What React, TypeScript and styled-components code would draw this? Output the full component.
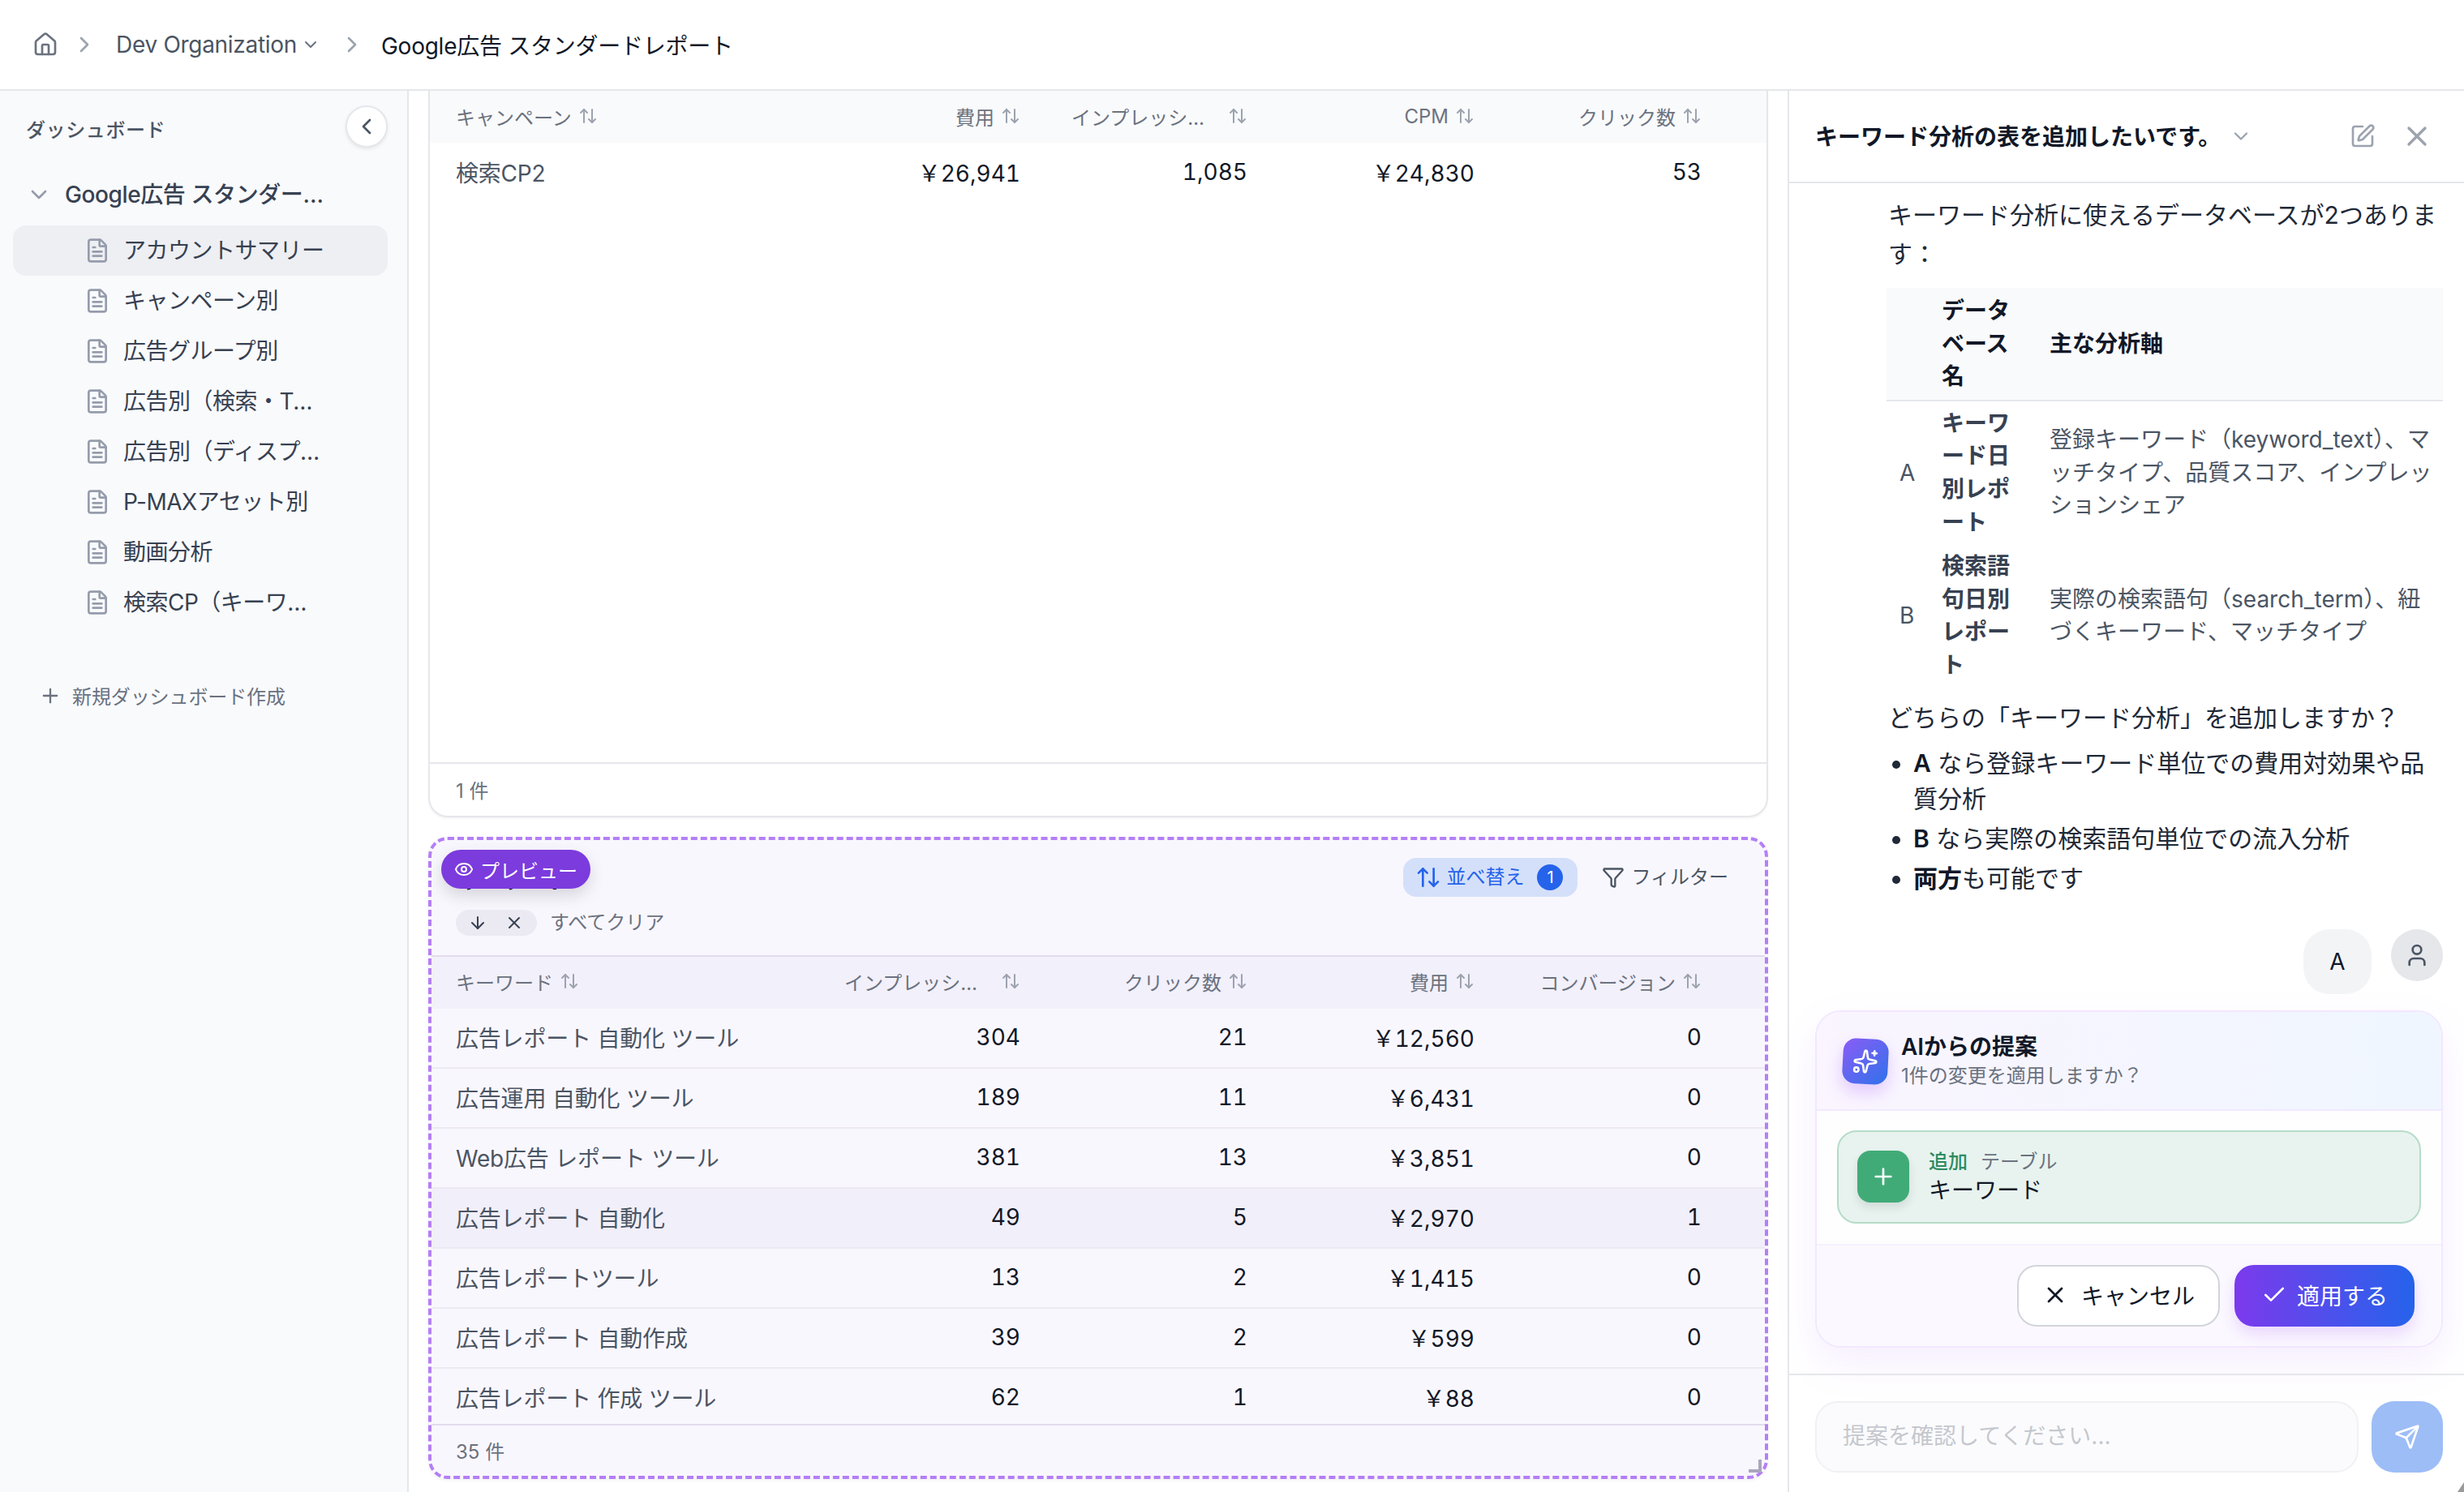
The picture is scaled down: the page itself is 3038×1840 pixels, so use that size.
import React from 'react';
import styled, {createGlobalStyle} from 'styled-components';
import {
  ArrowDown,
  ArrowUpDown,
  Check,
  ChevronDown,
  ChevronLeft,
  ChevronRight,
  Eye,
  FileText,
  Funnel,
  House,
  Plus,
  Send,
  Sparkles,
  SquarePen,
  User,
  X,
} from 'lucide-react';

const GlobalStyle = createGlobalStyle`
  html, body {
    margin: 0;
    padding: 0;
    background: #fff;
  }
  body {
    font-family: Inter, "Noto Sans CJK JP", sans-serif;
    color: #111827;
  }
  * {
    box-sizing: border-box;
  }
`;

const Page = styled.div`
  width: 3038px;
  height: 1840px;
  display: flex;
  flex-direction: column;
  overflow: hidden;
  position: relative;
  background: #fff;
`;

const TopBar = styled.header`
  height: 112px;
  flex: none;
  display: flex;
  align-items: center;
  padding-left: 40px;
  border-bottom: 2px solid #e5e7eb;
  font-size: 28px;
`;

const HomeIcon = styled(House)`
  color: #6b7280;
  flex: none;
`;

const CrumbSep = styled(ChevronRight)<{$left: number; $right: number}>`
  color: #9ca3af;
  flex: none;
  margin: 0 ${p => p.$right}px 0 ${p => p.$left}px;
`;

const Crumb = styled.span`
  color: #4b5563;
  letter-spacing: -0.3px;
`;

const CrumbChevron = styled(ChevronDown)`
  color: #6b7280;
  margin-left: 5px;
`;

const CrumbCurrent = styled.span`
  color: #111827;
  letter-spacing: -0.25px;
`;

const Workspace = styled.div`
  flex: 1;
  min-height: 0;
  display: flex;
`;

const Sidebar = styled.aside`
  width: 504px;
  flex: none;
  background: #f9fafc;
  border-right: 2px solid #e5e7eb;
`;

const SidebarHead = styled.div`
  display: flex;
  align-items: center;
  justify-content: space-between;
  padding: 18px 24px 0 32px;
`;

const SidebarTitle = styled.div`
  font-size: 24px;
  font-weight: 500;
  color: #4b5563;
  letter-spacing: 0.6px;
  margin-top: 5px;
`;

const CollapseButton = styled.div`
  width: 52px;
  height: 52px;
  border-radius: 50%;
  background: #fff;
  border: 2px solid #e5e7eb;
  box-shadow: 0 2px 4px rgba(0, 0, 0, 0.08);
  display: flex;
  align-items: center;
  justify-content: center;
  color: #4b5563;
`;

const TreeRoot = styled.div`
  height: 62px;
  margin-top: 27px;
  margin-bottom: 7px;
  padding: 0 0 5px 32px;
  display: flex;
  align-items: center;
  gap: 16px;
  color: #374151;
  font-size: 28px;
  font-weight: 500;
  letter-spacing: -0.4px;

  > svg {
    color: #959cab;
    flex: none;
    margin-top: 5px;
  }
  > span {
    max-width: 326px;
    overflow: hidden;
    white-space: nowrap;
    text-overflow: ellipsis;
  }
`;

const TreeItem = styled.div<{$active?: boolean}>`
  height: 62px;
  margin: 0 24px 0 16px;
  padding: 0 0 4px 88px;
  display: flex;
  align-items: center;
  gap: 16px;
  border-radius: 16px;
  font-size: 28px;
  color: #374151;
  letter-spacing: -0.5px;
  background: ${p => (p.$active ? '#eeeff3' : 'transparent')};

  > svg {
    color: #959cab;
    flex: none;
    margin-top: 4px;
  }
  > span {
    max-width: 250px;
    overflow: hidden;
    white-space: nowrap;
    text-overflow: ellipsis;
  }
`;

const NewDashboard = styled.div`
  margin-top: 66px;
  padding-left: 48px;
  display: flex;
  align-items: center;
  gap: 13px;
  font-size: 24px;
  color: #6b7280;
  letter-spacing: -0.1px;
`;

const Main = styled.main`
  flex: 1;
  min-width: 0;
  padding: 0 24px 16px;
  display: flex;
  flex-direction: column;
  gap: 24px;
`;

const TableCard = styled.section`
  height: 896px;
  flex: none;
  display: flex;
  flex-direction: column;
  background: #fff;
  border: 2px solid #e5e7eb;
  border-top: none;
  border-radius: 0 0 24px 24px;
  box-shadow: 0 2px 2px rgba(0, 0, 0, 0.04);
  overflow: hidden;
`;

const PreviewCard = styled.section`
  height: 792px;
  flex: none;
  position: relative;
  display: flex;
  flex-direction: column;
  background: #f9f7fe;
  border: 4px dashed #b47ff6;
  border-radius: 24px;
  box-shadow: 0 2px 4px rgba(0, 0, 0, 0.05);
`;

const PreviewBadge = styled.div`
  position: absolute;
  left: 12px;
  top: 12px;
  z-index: 2;
  height: 48px;
  display: flex;
  align-items: center;
  gap: 8px;
  padding: 0 16px;
  border-radius: 24px;
  background: #7c3bdd;
  color: #fff;
  font-size: 24px;
  box-shadow: 0 8px 20px rgba(0, 0, 0, 0.14);
`;

const Toolbar = styled.div`
  flex: none;
  padding: 22px 33px 24px 30px;
  display: flex;
  flex-wrap: wrap;
  align-items: center;
  justify-content: space-between;
  row-gap: 16px;
`;

const ToolbarTitle = styled.div`
  height: 40px;
  line-height: 40px;
  margin-top: 8px;
  font-size: 28px;
  font-weight: 600;
  color: #111827;
`;

const ToolbarActions = styled.div`
  display: flex;
  align-items: center;
  gap: 17px;
`;

const SortButton = styled.div`
  height: 48px;
  display: flex;
  align-items: center;
  padding: 0 18px 0 15px;
  border-radius: 16px;
  background: #d4e0fa;
  color: #2563eb;
  font-size: 24px;
  line-height: 32px;
  gap: 6px;
`;

const SortCount = styled.span`
  width: 32px;
  height: 32px;
  margin-left: 10px;
  border-radius: 50%;
  background: #2563eb;
  color: #fff;
  font-size: 20px;
  display: flex;
  align-items: center;
  justify-content: center;
`;

const FilterButton = styled.div`
  height: 48px;
  display: flex;
  align-items: center;
  gap: 8px;
  padding: 0 12px 0 13px;
  font-size: 24px;
  line-height: 32px;
  color: #4b5563;
`;

const SortRow = styled.div`
  width: 100%;
  height: 32px;
  line-height: 32px;
  display: flex;
  align-items: center;
  gap: 16px;
  font-size: 24px;
  color: #6b7280;
`;

const SortChip = styled.div`
  width: 100px;
  height: 32px;
  padding: 0 16px 0 15px;
  display: flex;
  align-items: center;
  justify-content: space-between;
  border-radius: 16px;
  background: #ebe9f2;
  color: #374151;
`;

const TableGrid = styled.div<{$preview?: boolean}>`
  display: grid;
  grid-template-columns: 416px repeat(4, 280px);
  align-items: center;
  padding-left: ${p => (p.$preview ? 30 : 32)}px;
`;

const HeadRow = styled(TableGrid)`
  flex: none;
  height: ${p => (p.$preview ? 66 : 64)}px;
  padding-bottom: ${p => (p.$preview ? 4 : 2)}px;
  background: ${p => (p.$preview ? '#f2f0fa' : '#f9fafb')};
  border-top: ${p => (p.$preview ? '2px solid #e1dcec' : 'none')};
  font-size: 24px;
  color: #6b7280;
`;

const HeadCell = styled.div<{$right?: boolean}>`
  display: flex;
  align-items: center;
  justify-content: ${p => (p.$right ? 'flex-end' : 'flex-start')};
  gap: 8px;
  white-space: nowrap;

  > svg {
    flex: none;
    color: #9ca3af;
  }
`;

const HeadLabelClamp = styled.span`
  width: 183px;
  margin-right: 2px;
  overflow: hidden;
  text-overflow: ellipsis;
`;

const Rows = styled.div`
  flex: 1;
  min-height: 0;
  overflow: hidden;
`;

const DataRow = styled(TableGrid)<{$hover?: boolean}>`
  height: 74px;
  padding-bottom: 3px;
  font-size: 28px;
  background: ${p => (p.$hover ? '#f1eff9' : 'transparent')};
  border-bottom: ${p => (p.$preview ? '2px solid #ece9f3' : 'none')};
`;

const NameCell = styled.div`
  color: #4b5563;
  white-space: nowrap;
  letter-spacing: -0.2px;
`;

const NumCell = styled.div`
  color: #111827;
  text-align: right;
  font-variant-numeric: tabular-nums;
`;

const TableFooter = styled.div<{$preview?: boolean}>`
  flex: none;
  height: ${p => (p.$preview ? 64 : 66)}px;
  padding-bottom: 2px;
  display: flex;
  align-items: center;
  padding-left: ${p => (p.$preview ? 30 : 32)}px;
  border-top: 2px solid ${p => (p.$preview ? '#e1dcec' : '#e5e7eb')};
  font-size: 24px;
  color: #6b7280;
`;

const ResizeHandle = styled.div`
  position: absolute;
  right: 4px;
  bottom: 4px;
  width: 16px;
  height: 16px;
  border-right: 4px solid #a9a6bd;
  border-bottom: 4px solid #a9a6bd;
`;

const ChatPanel = styled.aside`
  width: 834px;
  flex: none;
  display: flex;
  flex-direction: column;
  border-left: 2px solid #e5e7eb;
`;

const ChatHeader = styled.div`
  height: 114px;
  flex: none;
  display: flex;
  align-items: center;
  padding: 0 38px 0 32px;
  border-bottom: 2px solid #e5e7eb;
`;

const ChatTitle = styled.div`
  font-size: 28px;
  font-weight: 600;
  color: #111827;
  margin-bottom: 2px;
`;

const ChatTitleChevron = styled(ChevronDown)`
  color: #9ca3af;
  margin-left: 11px;
`;

const ChatActions = styled.div`
  margin-left: auto;
  display: flex;
  align-items: center;
  gap: 31px;
  color: #9ca3af;
`;

const Messages = styled.div`
  flex: 1;
  min-height: 0;
  padding: 15px 26px 0 32px;
`;

const Answer = styled.div`
  padding-left: 90px;
  font-size: 30px;
  color: #1f2937;
`;

const Para = styled.p`
  margin: 0;
  line-height: 48px;
`;

const DataTable = styled.table`
  width: 686px;
  margin: 18px 0 13px -2px;
  table-layout: fixed;
  border-collapse: collapse;
  font-size: 28px;
  line-height: 40.6px;

  th:nth-child(1) {
    width: 52px;
  }
  th:nth-child(2) {
    width: 133px;
  }
  th {
    padding: 8px 16px;
    text-align: left;
    font-weight: 600;
    color: #111827;
    background: #f9fafb;
    border-bottom: 2px solid #e5e7eb;
  }
  td {
    padding: 7px 6px 7px 16px;
    color: #4b5563;
    vertical-align: middle;
  }
  td:nth-child(2) {
    padding-right: 16px;
    font-weight: 600;
    color: #374151;
  }
`;

const BulletList = styled.ul`
  margin: 10px 0 0;
  padding-left: 31px;
  line-height: 44px;

  li + li {
    margin-top: 5px;
  }
  strong {
    font-weight: 600;
    color: #111827;
  }
`;

const UserRow = styled.div`
  margin-top: 41px;
  display: flex;
  justify-content: flex-end;
  align-items: flex-start;
  gap: 24px;
`;

const UserBubble = styled.div`
  width: 84px;
  height: 80px;
  border-radius: 32px;
  background: #f3f4f6;
  font-size: 28px;
  color: #111827;
  display: flex;
  align-items: center;
  justify-content: center;
`;

const UserAvatar = styled.div`
  width: 64px;
  height: 64px;
  border-radius: 50%;
  background: #e5e7eb;
  color: #4b5563;
  display: flex;
  align-items: center;
  justify-content: center;
`;

const ProposalCard = styled.div`
  margin-top: 20px;
  height: 416px;
  display: flex;
  flex-direction: column;
  border: 2px solid #f3e8ff;
  border-radius: 32px;
  background: #fff;
  box-shadow: 0 20px 50px rgba(168, 85, 247, 0.1);
`;

const ProposalHead = styled.div`
  height: 122px;
  flex: none;
  display: flex;
  align-items: center;
  gap: 16px;
  padding: 2px 0 0 32px;
  border-bottom: 2px solid #f3e8ff;
  border-radius: 30px 30px 0 0;
  background: linear-gradient(90deg, #faf5ff, #eff6ff);
`;

const SparkTile = styled.div`
  width: 56px;
  height: 56px;
  flex: none;
  border-radius: 16px;
  transform: rotate(3deg);
  background: linear-gradient(135deg, #8b5cf6, #2f72ea);
  box-shadow: 0 10px 20px rgba(168, 85, 247, 0.28);
  color: #fff;
  display: flex;
  align-items: center;
  justify-content: center;
`;

const ProposalTitle = styled.div`
  font-size: 28px;
  line-height: 36px;
  font-weight: 600;
  color: #111827;
`;

const ProposalSub = styled.div`
  font-size: 24px;
  line-height: 36px;
  color: #6b7280;
`;

const ProposalBody = styled.div`
  height: 166px;
  flex: none;
  padding: 24px 25px;
  border-bottom: 2px solid #f6f0ff;
  background: #fefeff;
`;

const ChangeRow = styled.div`
  height: 115px;
  display: flex;
  align-items: center;
  gap: 24px;
  padding-left: 23px;
  border: 2px solid #b5dcc8;
  border-radius: 24px;
  background: #e8f3ef;
`;

const ChangeTile = styled.div`
  width: 64px;
  height: 64px;
  border-radius: 16px;
  background: #41ab78;
  box-shadow: 0 6px 12px rgba(0, 0, 0, 0.1);
  color: #fff;
  display: flex;
  align-items: center;
  justify-content: center;
`;

const ChangeMeta = styled.div`
  display: flex;
  gap: 16px;
  font-size: 24px;
  line-height: 34px;
  color: #6b7280;

  > b {
    font-weight: 500;
    color: #2e8b63;
  }
`;

const ChangeName = styled.div`
  font-size: 28px;
  line-height: 36px;
  color: #111827;
`;

const ProposalFoot = styled.div`
  flex: 1;
  display: flex;
  align-items: center;
  justify-content: flex-end;
  gap: 18px;
  padding-right: 33px;
  border-radius: 0 0 30px 30px;
  background: #fbf9ff;
`;

const CancelButton = styled.div`
  height: 76px;
  width: 250px;
  padding-bottom: 2px;
  display: flex;
  align-items: center;
  justify-content: center;
  gap: 16px;
  border: 2px solid #d1d5db;
  border-radius: 24px;
  background: #fff;
  font-size: 28px;
  color: #111827;
`;

const ApplyButton = styled.div`
  height: 76px;
  width: 222px;
  padding-bottom: 2px;
  display: flex;
  align-items: center;
  justify-content: center;
  gap: 12px;
  border-radius: 24px;
  background: linear-gradient(90deg, #7c3aed, #2563eb);
  box-shadow: 0 10px 20px rgba(168, 85, 247, 0.2);
  font-size: 28px;
  color: #fff;
`;

const Composer = styled.div`
  height: 146px;
  flex: none;
  display: flex;
  gap: 16px;
  padding: 32px 26px 0 32px;
  border-top: 2px solid #e5e7eb;
`;

const ComposerInput = styled.div`
  flex: 1;
  height: 88px;
  padding: 0 0 6px 32px;
  display: flex;
  align-items: center;
  border: 2px solid #f1f1f4;
  border-radius: 28px;
  background: #fbfbfd;
  font-size: 28px;
  color: #c5c8ce;
`;

const SendButton = styled.div`
  width: 88px;
  height: 88px;
  border-radius: 28px;
  background: #9dbdf6;
  color: #fff;
  display: flex;
  align-items: center;
  justify-content: center;
`;

const CornerMark = styled.svg`
  position: absolute;
  right: 0;
  bottom: 0;
`;

const navItems = [
  'アカウントサマリー',
  'キャンペーン別',
  '広告グループ別',
  '広告別（検索・TOP）',
  '広告別（ディスプレイ）',
  'P-MAXアセット別',
  '動画分析',
  '検索CP（キーワード別）',
];

const keywordRows = [
  ['広告レポート 自動化 ツール', '304', '21', '￥12,560', '0'],
  ['広告運用 自動化 ツール', '189', '11', '￥6,431', '0'],
  ['Web広告 レポート ツール', '381', '13', '￥3,851', '0'],
  ['広告レポート 自動化', '49', '5', '￥2,970', '1'],
  ['広告レポートツール', '13', '2', '￥1,415', '0'],
  ['広告レポート 自動作成', '39', '2', '￥599', '0'],
  ['広告レポート 作成 ツール', '62', '1', '￥88', '0'],
];

function HeaderLabels({labels, preview}: {labels: string[]; preview?: boolean}) {
  return (
    <HeadRow $preview={preview}>
      {labels.map((label, i) => (
        <HeadCell key={label} $right={i > 0}>
          {label === 'インプレッション'
            ? <HeadLabelClamp>{label}</HeadLabelClamp>
            : <span>{label}</span>}
          <ArrowUpDown size={24}/>
        </HeadCell>
      ))}
    </HeadRow>
  );
}

function App() {
  return (
    <Page>
      <GlobalStyle/>
      <TopBar>
        <HomeIcon size={32}/>
        <CrumbSep size={32} $left={16} $right={23}/>
        <Crumb>Dev Organization</Crumb>
        <CrumbChevron size={24}/>
        <CrumbSep size={32} $left={23} $right={20}/>
        <CrumbCurrent>Google広告 スタンダードレポート</CrumbCurrent>
      </TopBar>

      <Workspace>
        <Sidebar>
          <SidebarHead>
            <SidebarTitle>ダッシュボード</SidebarTitle>
            <CollapseButton><ChevronLeft size={32}/></CollapseButton>
          </SidebarHead>
          <TreeRoot>
            <ChevronDown size={32}/>
            <span>Google広告 スタンダードレポート</span>
          </TreeRoot>
          {navItems.map((item, i) => (
            <TreeItem key={item} $active={i === 0}>
              <FileText size={32}/>
              <span>{item}</span>
            </TreeItem>
          ))}
          <NewDashboard>
            <Plus size={28}/>
            新規ダッシュボード作成
          </NewDashboard>
        </Sidebar>

        <Main>
          <TableCard>
            <HeaderLabels labels={['キャンペーン', '費用', 'インプレッション', 'CPM', 'クリック数']}/>
            <Rows>
              <DataRow>
                <NameCell>検索CP2</NameCell>
                <NumCell>￥26,941</NumCell>
                <NumCell>1,085</NumCell>
                <NumCell>￥24,830</NumCell>
                <NumCell>53</NumCell>
              </DataRow>
            </Rows>
            <TableFooter>1 件</TableFooter>
          </TableCard>

          <PreviewCard>
            <PreviewBadge><Eye size={24}/>プレビュー</PreviewBadge>
            <Toolbar>
              <ToolbarTitle>キーワード</ToolbarTitle>
              <ToolbarActions>
                <SortButton>
                  <ArrowUpDown size={32}/>
                  並べ替え
                  <SortCount>1</SortCount>
                </SortButton>
                <FilterButton>
                  <Funnel size={28}/>
                  フィルター
                </FilterButton>
              </ToolbarActions>
              <SortRow>
                <SortChip>
                  <ArrowDown size={24}/>
                  <X size={24}/>
                </SortChip>
                すべてクリア
              </SortRow>
            </Toolbar>
            <HeaderLabels preview labels={['キーワード', 'インプレッション', 'クリック数', '費用', 'コンバージョン']}/>
            <Rows>
              {keywordRows.map((row, i) => (
                <DataRow key={row[0]} $preview $hover={i === 3}>
                  <NameCell>{row[0]}</NameCell>
                  {row.slice(1).map((v, j) => <NumCell key={j}>{v}</NumCell>)}
                </DataRow>
              ))}
            </Rows>
            <TableFooter $preview>35 件</TableFooter>
            <ResizeHandle/>
          </PreviewCard>
        </Main>

        <ChatPanel>
          <ChatHeader>
            <ChatTitle>キーワード分析の表を追加したいです。</ChatTitle>
            <ChatTitleChevron size={28}/>
            <ChatActions>
              <SquarePen size={32}/>
              <X size={40}/>
            </ChatActions>
          </ChatHeader>

          <Messages>
            <Answer>
              <Para>キーワード分析に使えるデータベースが2つあります：</Para>
              <DataTable>
                <thead>
                  <tr>
                    <th></th>
                    <th>データベース名</th>
                    <th>主な分析軸</th>
                  </tr>
                </thead>
                <tbody>
                  <tr>
                    <td>A</td>
                    <td>キーワード日別レポート</td>
                    <td>登録キーワード（keyword_text）、マッチタイプ、品質スコア、インプレッションシェア</td>
                  </tr>
                  <tr>
                    <td>B</td>
                    <td>検索語句日別レポート</td>
                    <td>実際の検索語句（search_term）、紐づくキーワード、マッチタイプ</td>
                  </tr>
                </tbody>
              </DataTable>
              <Para>どちらの「キーワード分析」を追加しますか？</Para>
              <BulletList>
                <li><strong>A</strong> なら登録キーワード単位での費用対効果や品質分析</li>
                <li><strong>B</strong> なら実際の検索語句単位での流入分析</li>
                <li><strong>両方</strong>も可能です</li>
              </BulletList>
            </Answer>

            <UserRow>
              <UserBubble>A</UserBubble>
              <UserAvatar><User size={32}/></UserAvatar>
            </UserRow>

            <ProposalCard>
              <ProposalHead>
                <SparkTile><Sparkles size={32}/></SparkTile>
                <div>
                  <ProposalTitle>AIからの提案</ProposalTitle>
                  <ProposalSub>1件の変更を適用しますか？</ProposalSub>
                </div>
              </ProposalHead>
              <ProposalBody>
                <ChangeRow>
                  <ChangeTile><Plus size={32}/></ChangeTile>
                  <div>
                    <ChangeMeta><b>追加</b><span>テーブル</span></ChangeMeta>
                    <ChangeName>キーワード</ChangeName>
                  </div>
                </ChangeRow>
              </ProposalBody>
              <ProposalFoot>
                <CancelButton><X size={32}/>キャンセル</CancelButton>
                <ApplyButton><Check size={32}/>適用する</ApplyButton>
              </ProposalFoot>
            </ProposalCard>
          </Messages>

          <Composer>
            <ComposerInput>提案を確認してください...</ComposerInput>
            <SendButton><Send size={32}/></SendButton>
          </Composer>
        </ChatPanel>
      </Workspace>
      <CornerMark width="10" height="12" viewBox="0 0 10 12">
        <polygon points="10,0 10,12 2,12" fill="#9a9a9a"/>
      </CornerMark>
    </Page>
  );
}

export default App;
